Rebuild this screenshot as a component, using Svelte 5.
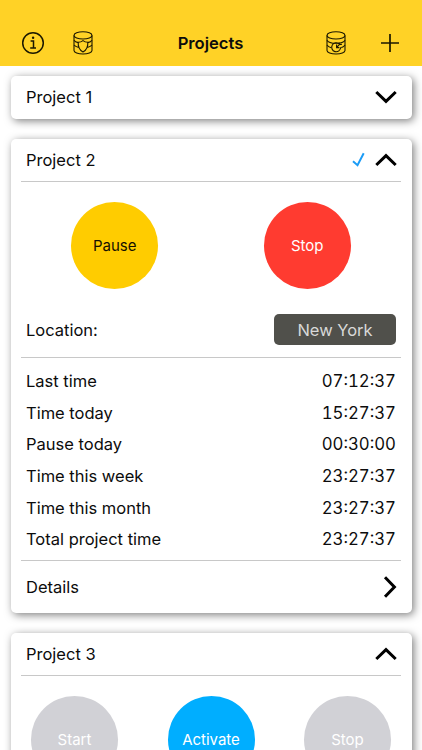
<script lang="ts">
  interface Action {
    label: string;
    kind: 'pause' | 'stop' | 'activate' | 'disabled';
  }

  interface Project {
    name: string;
    open: boolean;
    active?: boolean;
    actions?: Action[];
    location?: string;
    times?: [string, string][];
  }

  let projects = $state<Project[]>([
    { name: 'Project 1', open: false },
    {
      name: 'Project 2',
      open: true,
      active: true,
      actions: [
        { label: 'Pause', kind: 'pause' },
        { label: 'Stop', kind: 'stop' },
      ],
      location: 'New York',
      times: [
        ['Last time', '07:12:37'],
        ['Time today', '15:27:37'],
        ['Pause today', '00:30:00'],
        ['Time this week', '23:27:37'],
        ['Time this month', '23:27:37'],
        ['Total project time', '23:27:37'],
      ],
    },
    {
      name: 'Project 3',
      open: true,
      actions: [
        { label: 'Start', kind: 'disabled' },
        { label: 'Activate', kind: 'activate' },
        { label: 'Stop', kind: 'disabled' },
      ],
    },
  ]);

  function toggle(project: Project): void {
    project.open = !project.open;
  }
</script>

{#snippet drum()}
  <ellipse cx="10" cy="4.4" rx="9" ry="3.6" />
  <path d="M1 4.4v15c0 2 4 3.6 9 3.6s9-1.6 9-3.6v-15" />
{/snippet}

<div class="screen">
  <header class="navbar">
    <div class="nav-group">
      <button class="nav-btn" type="button" aria-label="Info">
        <svg width="24" height="24" viewBox="0 0 24 24">
          <circle cx="12" cy="12" r="10.3" stroke-width="1.5" />
          <path d="M9.6 10h2.9v6.9M9.2 17h5.8" stroke-width="1.5" />
          <circle cx="12.1" cy="6.8" r="1.2" fill="#1c1800" stroke="none" />
        </svg>
      </button>
      <button class="nav-btn" type="button" aria-label="Protect data">
        <svg width="20" height="24" viewBox="0 0 20 24">
          {@render drum()}
          <path d="M1 9.2c.8 1.3 2.3 2 4.2 2.4M19 9.2c-.8 1.3-2.3 2-4.2 2.4M1 14c1 1.3 2.5 2 4.7 2.5M19 14c-1 1.3-2.5 2-4.7 2.5" />
          <path d="M10 9.6c-1.4 1.2-2.9 1.7-4.8 1.7-.3 4.8 1 7.7 4.8 9.7 3.8-2 5.1-4.9 4.8-9.7-1.9 0-3.4-.5-4.8-1.7z" />
        </svg>
      </button>
    </div>
    <h1>Projects</h1>
    <div class="nav-group right">
      <button class="nav-btn" type="button" aria-label="Restore data">
        <svg width="20" height="24" viewBox="0 0 20 24">
          {@render drum()}
          <path d="M1 9.2c1 1.9 4.5 3.1 9 3.1s8-1.2 9-3.1M1 14c.8 1.3 2.2 2.2 4.2 2.7M19 14c-.8 1.3-2 2.1-3.7 2.6" />
          <path d="M13.4 13.1a4.5 4.5 0 1 0 1.3 3.2M10.6 16.6l3.1-3.4M10.6 13.6v3h2.8M13 11.3l.6 2.3 2.4-.3" />
        </svg>
      </button>
      <button class="nav-btn" type="button" aria-label="Add project">
        <svg width="20" height="20" viewBox="0 0 20 20">
          <path d="M10 1v18M1 10h18" stroke-width="1.7" />
        </svg>
      </button>
    </div>
  </header>

  <main>
    {#each projects as project}
      <section class="card">
        <button class="card-head" class:open={project.open} type="button" onclick={() => toggle(project)}>
          <span class="name">{project.name}</span>
          {#if project.active}
            <svg class="check" width="13" height="15" viewBox="0 0 13 15">
              <path d="M1 9.3l4.5 3.9L11.7 1.2" />
            </svg>
          {/if}
          <svg class="chevron" class:up={project.open} width="22" height="14" viewBox="0 0 22 14">
            <path d="M1.3 2l9.7 9.4L20.7 2" />
          </svg>
        </button>

        {#if project.open}
          <div class="actions" class:triple={project.actions?.length === 3}>
            {#each project.actions ?? [] as action}
              <button class="round {action.kind}" type="button">{action.label}</button>
            {/each}
          </div>

          {#if project.location}
            <div class="location">
              <span>Location:</span>
              <button class="place" type="button">{project.location}</button>
            </div>
          {/if}

          {#if project.times}
            <dl class="times">
              {#each project.times as [label, value]}
                <div class="time-row">
                  <dt>{label}</dt>
                  <dd>{value}</dd>
                </div>
              {/each}
            </dl>
            <button class="details" type="button">
              <span>Details</span>
              <svg class="chevron" width="14" height="22" viewBox="0 0 14 22">
                <path d="M2 1.3l9.4 9.7L2 20.7" />
              </svg>
            </button>
          {/if}
        {/if}
      </section>
    {/each}
  </main>
</div>

<style>
  :global(body) {
    background: #fff;
    overflow: hidden;
  }

  .screen {
    height: 750px;
    overflow: hidden;
    background: #fff;
    color: #0c0c0c;
    font-family: Inter, 'Liberation Sans', sans-serif;
    font-size: 16.5px;
    line-height: 20px;
  }

  button {
    border: none;
    padding: 0;
    margin: 0;
    background: none;
    color: inherit;
    font: inherit;
    cursor: pointer;
  }

  svg {
    display: block;
    flex-shrink: 0;
    fill: none;
  }

  .navbar {
    box-sizing: border-box;
    height: 66px;
    padding: 20px 22px 0 21px;
    display: grid;
    grid-template-columns: 1fr auto 1fr;
    align-items: center;
    background: #ffd226;
  }

  .navbar svg {
    stroke: #1c1800;
    stroke-width: 1.1;
  }

  .nav-group {
    display: flex;
    align-items: center;
    gap: 28px;
  }

  .nav-group.right {
    justify-content: flex-end;
    gap: 34px;
  }

  h1 {
    margin: 0;
    font-size: 16.6px;
    font-weight: 600;
    line-height: 20px;
  }

  main {
    display: flex;
    flex-direction: column;
    gap: 20.5px;
    padding: 9.5px 10.5px 0;
  }

  .card {
    padding: 0 10.5px;
    border-radius: 5px;
    background: #fff;
    box-shadow: 2px 2px 9px rgba(0, 0, 0, 0.5);
  }

  .card-head {
    box-sizing: border-box;
    width: 100%;
    height: 43px;
    padding: 0 4px 0 5px;
    display: flex;
    align-items: center;
    text-align: left;
  }

  .card-head.open {
    height: 42px;
    padding-bottom: 1px;
  }

  .name {
    flex: 1;
  }

  .check {
    margin-right: 10px;
    stroke: #1c9cf6;
    stroke-width: 2;
  }

  .chevron {
    stroke: #000;
    stroke-width: 3;
  }

  .chevron.up {
    transform: rotate(180deg);
  }

  .actions {
    display: flex;
    justify-content: center;
    gap: 105.5px;
    padding: 20px 0 25px;
    border-top: 1px solid #c8c8c8;
  }

  .actions.triple {
    justify-content: space-between;
    gap: 0;
    padding-left: 10px;
    padding-right: 10px;
  }

  .round {
    width: 87px;
    height: 87px;
    border-radius: 50%;
    font-size: 15px;
    color: #fff;
  }

  .round.pause {
    background: #ffcc00;
    color: #141000;
  }

  .round.stop {
    background: #ff3b30;
  }

  .round.activate {
    background: #00aeff;
  }

  .round.disabled {
    background: #d1d1d6;
  }

  .location {
    display: flex;
    align-items: center;
    justify-content: space-between;
    padding: 0 5px 12px;
  }

  .place {
    width: 122px;
    height: 31px;
    border-radius: 5px;
    background: #50504b;
    color: #d8d8d8;
  }

  .times {
    margin: 0;
    padding: 7.5px 5px 4.5px;
    border-top: 1px solid #c8c8c8;
    border-bottom: 1px solid #c8c8c8;
  }

  .time-row {
    display: flex;
    align-items: center;
    justify-content: space-between;
    height: 31.6px;
  }

  dd {
    margin: 0;
    font-size: 16.8px;
    font-variant-numeric: tabular-nums;
  }

  .details {
    box-sizing: border-box;
    width: 100%;
    height: 52px;
    padding: 0 4px 0 5px;
    display: flex;
    align-items: center;
    justify-content: space-between;
  }
</style>
